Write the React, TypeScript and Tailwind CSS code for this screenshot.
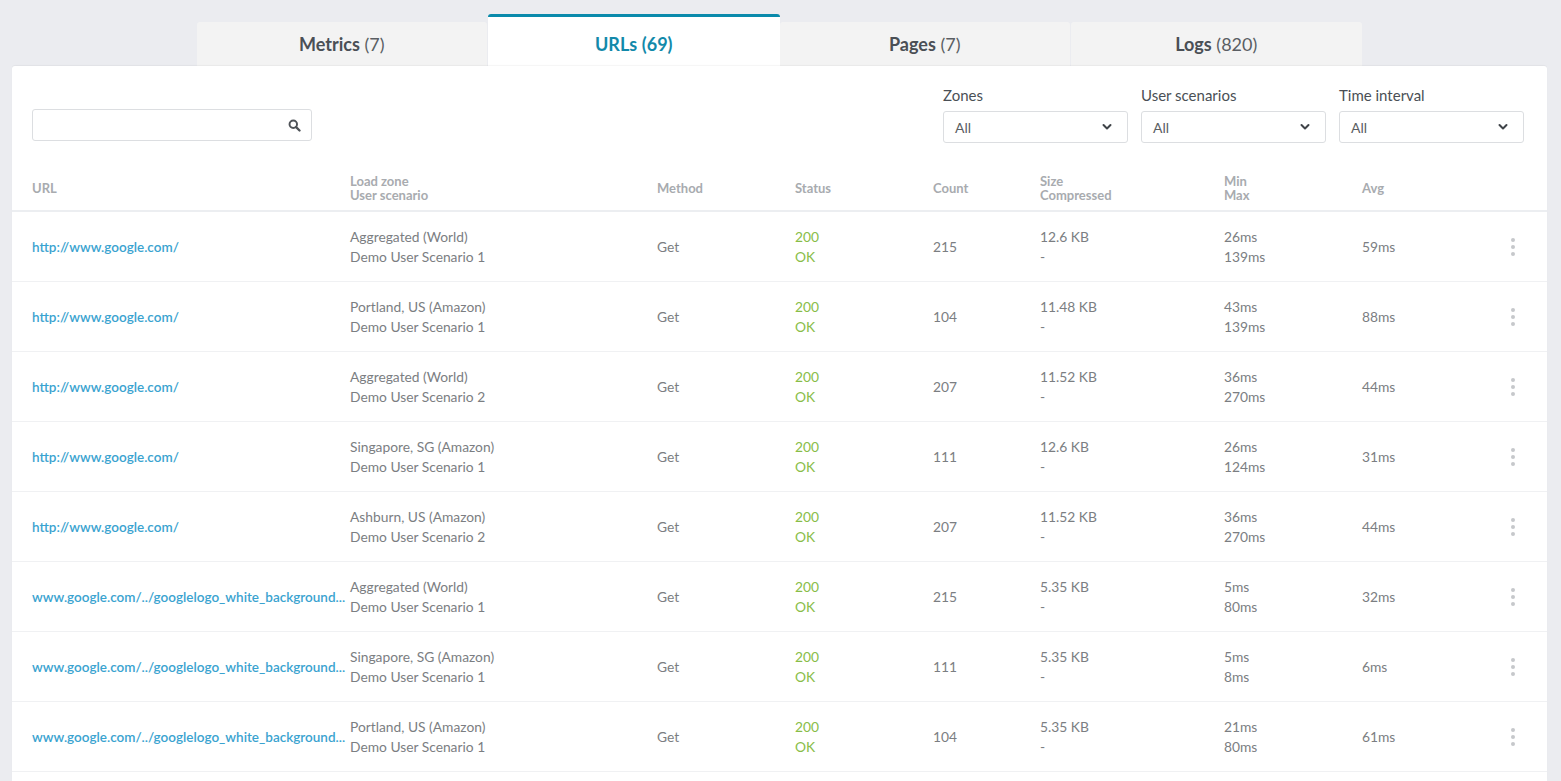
import React from "react";

type Row = {
  url: string;
  zone: string;
  scenario: string;
  count: string;
  size: string;
  min: string;
  max: string;
  avg: string;
};

const LONG = "www.google.com/../googlelogo_white_background...";
const G = "http://www.google.com/";

const rows: Row[] = [
  { url: G, zone: "Aggregated (World)", scenario: "Demo User Scenario 1", count: "215", size: "12.6 KB", min: "26ms", max: "139ms", avg: "59ms" },
  { url: G, zone: "Portland, US (Amazon)", scenario: "Demo User Scenario 1", count: "104", size: "11.48 KB", min: "43ms", max: "139ms", avg: "88ms" },
  { url: G, zone: "Aggregated (World)", scenario: "Demo User Scenario 2", count: "207", size: "11.52 KB", min: "36ms", max: "270ms", avg: "44ms" },
  { url: G, zone: "Singapore, SG (Amazon)", scenario: "Demo User Scenario 1", count: "111", size: "12.6 KB", min: "26ms", max: "124ms", avg: "31ms" },
  { url: G, zone: "Ashburn, US (Amazon)", scenario: "Demo User Scenario 2", count: "207", size: "11.52 KB", min: "36ms", max: "270ms", avg: "44ms" },
  { url: LONG, zone: "Aggregated (World)", scenario: "Demo User Scenario 1", count: "215", size: "5.35 KB", min: "5ms", max: "80ms", avg: "32ms" },
  { url: LONG, zone: "Singapore, SG (Amazon)", scenario: "Demo User Scenario 1", count: "111", size: "5.35 KB", min: "5ms", max: "8ms", avg: "6ms" },
  { url: LONG, zone: "Portland, US (Amazon)", scenario: "Demo User Scenario 1", count: "104", size: "5.35 KB", min: "21ms", max: "80ms", avg: "61ms" },
];

const GRID =
  "grid grid-cols-[318px_307px_138px_138px_107px_184px_138px_1fr_36px] items-center pl-[20px] pr-[16px]";

function SearchIcon() {
  return (
    <svg width="13" height="13" viewBox="0 0 16 16" fill="none">
      <circle cx="6.5" cy="6.5" r="4.6" stroke="#4f5358" strokeWidth="2.4" />
      <path d="M10 10 L14.2 14.2" stroke="#4f5358" strokeWidth="2.8" strokeLinecap="round" />
    </svg>
  );
}

function Chevron() {
  return (
    <svg width="10" height="8" viewBox="0 0 10 8" fill="none">
      <path d="M1.5 2 L5 5.5 L8.5 2" stroke="#3f4348" strokeWidth="2" strokeLinecap="round" strokeLinejoin="round" />
    </svg>
  );
}

function Kebab() {
  return (
    <div className="flex flex-col items-center gap-[3px]">
      <span className="block w-[4px] h-[4px] rounded-full bg-[#c6c8cb]" />
      <span className="block w-[4px] h-[4px] rounded-full bg-[#c6c8cb]" />
      <span className="block w-[4px] h-[4px] rounded-full bg-[#c6c8cb]" />
    </div>
  );
}

function Select({ label }: { label: string }) {
  return (
    <div className="flex flex-col w-[185px]">
      <div className="text-[15px] leading-[20px] text-[#4a4f55] mb-[6px]">{label}</div>
      <div className="h-[32px] border border-[#dcdee1] rounded-[3px] bg-white flex items-center justify-between pl-[11px] pr-[15px]">
        <span className="text-[14px] text-[#5a5e63]">All</span>
        <Chevron />
      </div>
    </div>
  );
}

function Tab({ name, count, active }: { name: string; count: string; active?: boolean }) {
  if (active) {
    return (
      <div className="h-[52px] bg-white border-t-[3px] border-[#0a8aab] rounded-t-[3px] flex items-center justify-center pt-[5px]">
        <span className="text-[18px] text-[#1289aa]">
          <span className="font-bold">{name}</span> <span className="font-bold">({count})</span>
        </span>
      </div>
    );
  }
  return (
    <div className="h-[44px] bg-[#f3f3f3] rounded-t-[3px] flex items-center justify-center mr-[1px]">
      <span className="text-[18px] text-[#4a4f55]">
        <span className="font-bold">{name}</span> <span className="text-[#5a5e63]">({count})</span>
      </span>
    </div>
  );
}

export default function App() {
  return (
    <div
      className="h-screen overflow-hidden flex flex-col bg-[#ebecf0] pl-[12px] pr-[14px] pt-[14px]"
      style={{ fontFamily: "Lato, 'Open Sans', sans-serif" }}
    >
      <div className="w-[1166px] mx-auto grid grid-cols-4 items-end">
        <Tab name="Metrics" count="7" />
        <Tab name="URLs" count="69" active />
        <Tab name="Pages" count="7" />
        <Tab name="Logs" count="820" />
      </div>
      <div className="flex-1 bg-white rounded-t-[3px] shadow-[0_-1px_1px_rgba(0,0,0,0.04)]">
        <div className="flex items-end justify-between pl-[20px] pr-[23px] pt-[19px]">
          <div className="w-[280px] h-[32px] border border-[#dcdee1] rounded-[3px] flex items-center justify-end pr-[10px] mb-[2px]">
            <SearchIcon />
          </div>
          <div className="flex gap-[13px]">
            <Select label="Zones" />
            <Select label="User scenarios" />
            <Select label="Time interval" />
          </div>
        </div>

        <div className={`${GRID} h-[47px] mt-[22px] border-b-[2px] border-[#eceef1] text-[13px] leading-[14px] font-bold text-[#a8abaf]`}>
          <div>URL</div>
          <div>
            <div>Load zone</div>
            <div>User scenario</div>
          </div>
          <div>Method</div>
          <div>Status</div>
          <div>Count</div>
          <div>
            <div>Size</div>
            <div>Compressed</div>
          </div>
          <div>
            <div>Min</div>
            <div>Max</div>
          </div>
          <div>Avg</div>
          <div />
        </div>

        {rows.map((r, i) => (
          <div
            key={i}
            className={`${GRID} h-[70px] border-b border-[#f0f1f3] text-[13.8px] leading-[20px] text-[#7b7e82]`}
          >
            <div className="text-[#3aa3d0] font-semibold text-[13.5px] whitespace-nowrap">{r.url}</div>
            <div>
              <div>{r.zone}</div>
              <div>{r.scenario}</div>
            </div>
            <div>Get</div>
            <div className="text-[#88bd48]">
              <div>200</div>
              <div>OK</div>
            </div>
            <div>{r.count}</div>
            <div>
              <div>{r.size}</div>
              <div>-</div>
            </div>
            <div>
              <div>{r.min}</div>
              <div>{r.max}</div>
            </div>
            <div>{r.avg}</div>
            <div className="flex justify-center">
              <Kebab />
            </div>
          </div>
        ))}
      </div>
    </div>
  );
}
